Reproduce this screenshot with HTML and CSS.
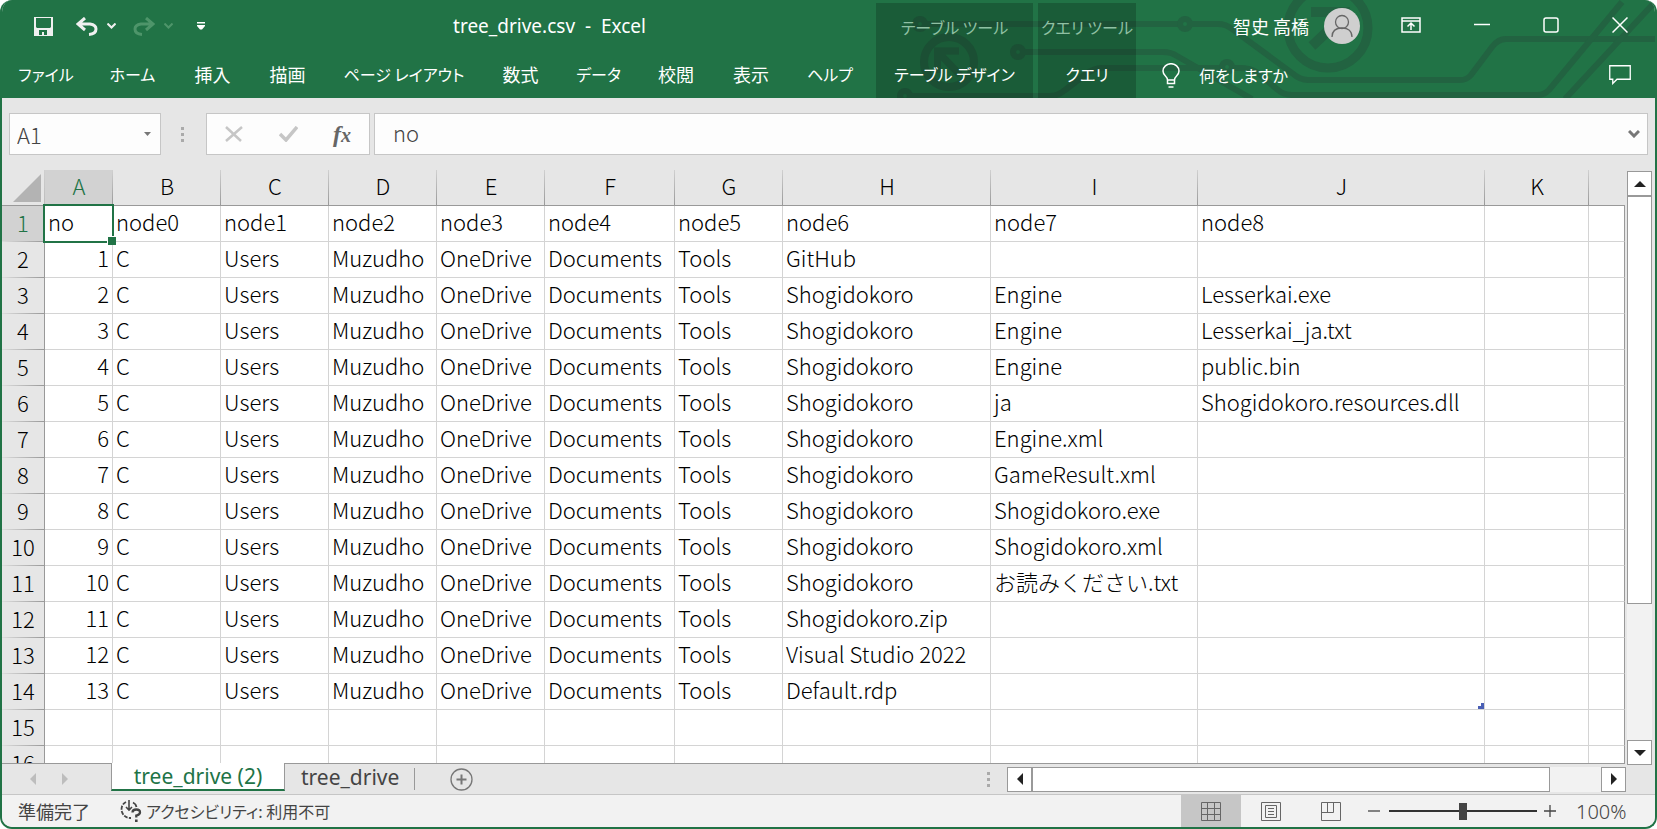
FILE: index.html
```
<!DOCTYPE html>
<html lang="ja">
<head>
<meta charset="utf-8">
<title>tree_drive.csv - Excel</title>
<link rel="stylesheet" href="styles.css">
</head>
<body>
<div class="window">
  <header class="header">
    <svg class="circuit" width="797" height="98" viewBox="860 0 797 98" aria-hidden="true">
      <g fill="none" stroke="#226341" stroke-width="6">
        <circle cx="920" cy="24" r="5"/><path d="M926 24H1179"/>
        <circle cx="1185" cy="24" r="5"/><path d="M1191 24H1218Q1226 24 1232 29L1292 73Q1300 80 1308 80H1460Q1467 80 1471 75L1492 47Q1498 39 1506 39H1657"/>
        <circle cx="1018" cy="52" r="5"/><path d="M1024 52H1163Q1171 52 1177 56L1252 99"/>
        <circle cx="905" cy="96" r="5"/><path d="M911 96H1050Q1058 96 1065 90L1086 74Q1094 68 1102 68H1220"/>
        <circle cx="1227" cy="67" r="5"/><path d="M1233 68H1240Q1250 68 1258 73L1278 90Q1284 95 1292 95H1538Q1544 95 1549 90L1622 2M1565 99L1653 4"/>
        <circle cx="949" cy="62" r="25" stroke-width="8"/><path stroke-width="7" d="M959 51H937.500V73M938 52L960 75"/>
        <circle cx="1328" cy="28" r="40" stroke-width="9"/><path stroke-width="10" d="M1311 12H1350M1347 13L1312 46"/>
      </g>
    </svg>
    <div class="header-left">
      <div class="title-row">
        <div class="quick">
          <button class="icon-button" aria-label="上書き保存"><svg width="19" height="19" viewBox="0 0 19 19"><path fill="#f0f0f0" fill-rule="evenodd" d="M0 0H19V19H0ZM2 1V10L3 11H16L17 10V1ZM5 13V18H8V15H10V18H13V13Z"/></svg></button>
          <button class="icon-button undo" aria-label="元に戻す"><svg width="22" height="19" viewBox="0 0 22 19"><path d="M9 1L2 7L9 13M2 7H14Q20 8 20 12Q20 17 13 17.500" fill="none" stroke="#f0f0f0" stroke-width="3"/></svg></button>
          <button class="icon-button drop" aria-label="元に戻すの一覧"><svg width="9" height="6" viewBox="0 0 9 6"><path d="M.5 .5L4.500 4.500L8.500 .5" fill="none" stroke="#f0f0f0" stroke-width="2"/></svg></button>
          <button class="icon-button redo" aria-label="やり直し" disabled><svg width="22" height="19" viewBox="0 0 22 19"><path d="M13 1L20 7L13 13M20 7H8Q2 8 2 12Q2 17 9 17.500" fill="none" stroke="#4e956a" stroke-width="3"/></svg></button>
          <button class="icon-button drop" aria-label="やり直しの一覧" disabled><svg width="9" height="6" viewBox="0 0 9 6"><path d="M.5 .5L4.500 4.500L8.500 .5" fill="none" stroke="#4e956a" stroke-width="2"/></svg></button>
          <button class="icon-button customize" aria-label="クイック アクセス ツール バーのユーザー設定"><svg width="8" height="8" viewBox="0 0 8 8"><path d="M0 0H8V1.500H0ZM0 3H8V4L5 7.500H3L0 4Z" fill="#fff"/></svg></button>
        </div>
        <h1 class="title">tree_drive.csv&nbsp; -&nbsp; Excel</h1>
      </div>
      <nav class="tabs">
        <button class="tab kana">ファイル</button><button class="tab kana">ホーム</button><button class="tab">挿入</button><button class="tab">描画</button><button class="tab kana">ページ レイアウト</button><button class="tab">数式</button><button class="tab kana">データ</button><button class="tab">校閲</button><button class="tab">表示</button><button class="tab kana">ヘルプ</button>
      </nav>
    </div>
    <div class="context context-table"><span class="context-title">テーブル ツール</span><button class="tab kana">テーブル デザイン</button></div>
    <div class="context context-query"><span class="context-title">クエリ ツール</span><button class="tab kana">クエリ</button></div>
    <div class="header-right">
      <div class="title-row account">
        <span class="user">智史 高橋</span>
        <button class="icon-button avatar" aria-label="アカウント"><svg width="36" height="36" viewBox="0 0 36 36"><circle cx="18" cy="18" r="18" fill="#cfcfcf"/><g fill="none" stroke="#666" stroke-width="1.300"><circle cx="18" cy="14" r="6.500"/><path d="M8 29C8 23 12 20 18 20S28 23 28 29"/></g></svg></button>
        <button class="icon-button ribbon" aria-label="リボンの表示オプション"><svg width="20" height="16" viewBox="0 0 20 16"><path d="M1 1H19V15H1ZM1 4H19M10 13V6.500M6.500 9.500L10 6L13.500 9.500" fill="none" stroke="#fff" stroke-width="1.500"/></svg></button>
        <button class="icon-button win" aria-label="最小化"><svg width="16" height="16" viewBox="0 0 16 16"><path d="M0 7.500H16" stroke="#fff" stroke-width="1.500"/></svg></button>
        <button class="icon-button win" aria-label="最大化"><svg width="16" height="16" viewBox="0 0 16 16"><rect x="1" y="1" width="14" height="14" rx="2" fill="none" stroke="#fff" stroke-width="1.500"/></svg></button>
        <button class="icon-button win" aria-label="閉じる"><svg width="16" height="16" viewBox="0 0 16 16"><path d="M.5 .5L15.500 15.500M15.500 .5L.5 15.500" stroke="#fff" stroke-width="1.500"/></svg></button>
      </div>
      <div class="tell">
        <button class="tell-button"><svg width="18" height="25" viewBox="0 0 18 25"><path d="M5.500 17C5.500 13 1 13 1 8A8 7.300 0 0 1 17 8C17 13 12.500 13 12.500 17ZM5.500 17V20.500H12.500V17M6.500 24H11.500" fill="none" stroke="#fff" stroke-width="1.500"/></svg>何をしますか</button>
        <button class="icon-button" aria-label="コメント"><svg width="22" height="20" viewBox="0 0 22 20"><path d="M.75 .75H21.250V14.250H8L3.750 18.500V14.250H.75Z" fill="none" stroke="#fff" stroke-width="1.300"/></svg></button>
      </div>
    </div>
  </header>

  <div class="formula-row">
    <div class="name-box"><input aria-label="名前ボックス" value="A1"><svg width="7" height="4" viewBox="0 0 7 4"><path d="M0 0H7L3.500 4Z" fill="#777"/></svg></div>
    <svg class="dots" width="3" height="15" viewBox="0 0 3 15" aria-hidden="true"><path d="M0 0H3V3H0ZM0 6H3V9H0ZM0 12H3V15H0Z" fill="#aaa"/></svg>
    <div class="formula-tools">
      <button class="icon-button" aria-label="キャンセル" disabled><svg width="18" height="16" viewBox="0 0 18 16"><path d="M1 1L16 15M17 1L1 15" stroke="#c6c6c6" stroke-width="2.500"/></svg></button>
      <button class="icon-button" aria-label="入力" disabled><svg width="19" height="16" viewBox="0 0 19 16"><path d="M1 8L7 14L18 1" fill="none" stroke="#c6c6c6" stroke-width="3.500"/></svg></button>
      <button class="fx" aria-label="関数の挿入">f<span>x</span></button>
    </div>
    <div class="formula-box"><input aria-label="数式バー" value="no"><button class="icon-button" aria-label="数式バーの展開"><svg width="12" height="8" viewBox="0 0 12 8"><path d="M1 1L6 6L11 1" fill="none" stroke="#777" stroke-width="3"/></svg></button></div>
  </div>

  <main class="sheet">
    <div class="grid-view">
      <table class="grid">
        <colgroup><col class="c-row"><col class="c-a"><col class="c-108"><col class="c-108"><col class="c-108"><col class="c-108"><col class="c-f"><col class="c-108"><col class="c-h"><col class="c-i"><col class="c-j"><col class="c-k"><col></colgroup>
        <thead><tr><th class="corner"><svg width="28" height="28" viewBox="0 0 28 28" aria-label="すべて選択"><path d="M28 0V28H0Z" fill="#b3b3b3"/></svg></th><th class="active">A</th><th>B</th><th>C</th><th>D</th><th>E</th><th>F</th><th>G</th><th>H</th><th>I</th><th>J</th><th>K</th><th></th></tr></thead>
        <tbody>
          <tr><th class="active">1</th><td class="selected">no</td><td>node0</td><td>node1</td><td>node2</td><td>node3</td><td>node4</td><td>node5</td><td>node6</td><td>node7</td><td>node8</td><td></td><td></td></tr>
          <tr><th>2</th><td>1</td><td>C</td><td>Users</td><td>Muzudho</td><td>OneDrive</td><td>Documents</td><td>Tools</td><td>GitHub</td><td></td><td></td><td></td><td></td></tr>
          <tr><th>3</th><td>2</td><td>C</td><td>Users</td><td>Muzudho</td><td>OneDrive</td><td>Documents</td><td>Tools</td><td>Shogidokoro</td><td>Engine</td><td>Lesserkai.exe</td><td></td><td></td></tr>
          <tr><th>4</th><td>3</td><td>C</td><td>Users</td><td>Muzudho</td><td>OneDrive</td><td>Documents</td><td>Tools</td><td>Shogidokoro</td><td>Engine</td><td>Lesserkai_ja.txt</td><td></td><td></td></tr>
          <tr><th>5</th><td>4</td><td>C</td><td>Users</td><td>Muzudho</td><td>OneDrive</td><td>Documents</td><td>Tools</td><td>Shogidokoro</td><td>Engine</td><td>public.bin</td><td></td><td></td></tr>
          <tr><th>6</th><td>5</td><td>C</td><td>Users</td><td>Muzudho</td><td>OneDrive</td><td>Documents</td><td>Tools</td><td>Shogidokoro</td><td>ja</td><td>Shogidokoro.resources.dll</td><td></td><td></td></tr>
          <tr><th>7</th><td>6</td><td>C</td><td>Users</td><td>Muzudho</td><td>OneDrive</td><td>Documents</td><td>Tools</td><td>Shogidokoro</td><td>Engine.xml</td><td></td><td></td><td></td></tr>
          <tr><th>8</th><td>7</td><td>C</td><td>Users</td><td>Muzudho</td><td>OneDrive</td><td>Documents</td><td>Tools</td><td>Shogidokoro</td><td>GameResult.xml</td><td></td><td></td><td></td></tr>
          <tr><th>9</th><td>8</td><td>C</td><td>Users</td><td>Muzudho</td><td>OneDrive</td><td>Documents</td><td>Tools</td><td>Shogidokoro</td><td>Shogidokoro.exe</td><td></td><td></td><td></td></tr>
          <tr><th>10</th><td>9</td><td>C</td><td>Users</td><td>Muzudho</td><td>OneDrive</td><td>Documents</td><td>Tools</td><td>Shogidokoro</td><td>Shogidokoro.xml</td><td></td><td></td><td></td></tr>
          <tr><th>11</th><td>10</td><td>C</td><td>Users</td><td>Muzudho</td><td>OneDrive</td><td>Documents</td><td>Tools</td><td>Shogidokoro</td><td>お読みください.txt</td><td></td><td></td><td></td></tr>
          <tr><th>12</th><td>11</td><td>C</td><td>Users</td><td>Muzudho</td><td>OneDrive</td><td>Documents</td><td>Tools</td><td>Shogidokoro.zip</td><td></td><td></td><td></td><td></td></tr>
          <tr><th>13</th><td>12</td><td>C</td><td>Users</td><td>Muzudho</td><td>OneDrive</td><td>Documents</td><td>Tools</td><td>Visual Studio 2022</td><td></td><td></td><td></td><td></td></tr>
          <tr><th>14</th><td>13</td><td>C</td><td>Users</td><td>Muzudho</td><td>OneDrive</td><td>Documents</td><td>Tools</td><td>Default.rdp</td><td></td><td class="table-end"></td><td></td><td></td></tr>
          <tr><th>15</th><td></td><td></td><td></td><td></td><td></td><td></td><td></td><td></td><td></td><td></td><td></td><td></td></tr>
          <tr><th>16</th><td></td><td></td><td></td><td></td><td></td><td></td><td></td><td></td><td></td><td></td><td></td><td></td></tr>
        </tbody>
      </table>
    </div>
    <div class="vscroll">
      <button class="scroll-button" aria-label="上へスクロール"><svg width="12" height="6" viewBox="0 0 12 6"><path d="M0 6L6 0L12 6Z" fill="#222"/></svg></button>
      <div class="vtrack"><div class="vthumb"></div></div>
      <button class="scroll-button" aria-label="下へスクロール"><svg width="12" height="6" viewBox="0 0 12 6"><path d="M0 0L6 6L12 0Z" fill="#222"/></svg></button>
    </div>
  </main>

  <div class="sheet-bar">
    <div class="sheet-nav">
      <button class="icon-button" aria-label="前のシート" disabled><svg width="6" height="12" viewBox="0 0 6 12"><path d="M6 0V12L0 6Z" fill="#bdbdbd"/></svg></button>
      <button class="icon-button" aria-label="次のシート" disabled><svg width="6" height="12" viewBox="0 0 6 12"><path d="M0 0V12L6 6Z" fill="#bdbdbd"/></svg></button>
    </div>
    <button class="sheet-tab current">tree_drive (2)</button>
    <button class="sheet-tab">tree_drive</button>
    <button class="icon-button add" aria-label="新しいシート"><svg width="23" height="23" viewBox="0 0 23 23"><circle cx="11.500" cy="11.500" r="10.500" fill="none" stroke="#777" stroke-width="1.300"/><path d="M6.500 11.500H16.500M11.500 6.500V16.500" stroke="#777" stroke-width="2"/></svg></button>
    <svg class="dots" width="3" height="15" viewBox="0 0 3 15" aria-hidden="true"><path d="M0 0H3V3H0ZM0 6H3V9H0ZM0 12H3V15H0Z" fill="#aaa"/></svg>
    <div class="hscroll">
      <button class="scroll-button" aria-label="左へスクロール"><svg width="6" height="12" viewBox="0 0 6 12"><path d="M6 0V12L0 6Z" fill="#222"/></svg></button>
      <div class="htrack"><div class="hthumb"></div></div>
      <button class="scroll-button" aria-label="右へスクロール"><svg width="6" height="12" viewBox="0 0 6 12"><path d="M0 0V12L6 6Z" fill="#222"/></svg></button>
    </div>
  </div>

  <footer class="status">
    <span class="ready">準備完了</span>
    <button class="access"><svg width="22" height="22" viewBox="0 0 22 22"><g fill="none" stroke="#444"><path d="M6 2A8 8 0 0 0 2 12Q4 18 11 18" stroke-width="1.800" stroke-dasharray="4 1.300"/><path d="M13 2.500Q16 4 16.500 7" stroke-width="1.800"/><path d="M9 0V9M6 7L9 10L12 7" stroke-width="1.600"/><path d="M12.500 12.500Q12.500 9.500 16.300 9.500T20 12.500Q20 14.500 16.300 15.500V17.500" stroke-width="2.300"/><path d="M16.300 19.500V22" stroke-width="2.600"/></g></svg>アクセシビリティ: 利用不可</button>
    <div class="views">
      <button class="view on" aria-label="標準"><svg width="20" height="19" viewBox="0 0 20 19"><path d="M.5 .5H19.500V18.500H.5ZM.5 6.500H19.500M.5 12.500H19.500M6.500 .5V18.500M13.500 .5V18.500" fill="none" stroke="#666"/></svg></button>
      <button class="view" aria-label="ページ レイアウト表示"><svg width="20" height="19" viewBox="0 0 20 19"><path d="M.5 .5H19.500V18.500H.5ZM4.500 3.500H15.500V15.500H4.500ZM7 6.500H13M7 9.500H13M7 12.500H13" fill="none" stroke="#666"/></svg></button>
      <button class="view" aria-label="改ページ プレビュー"><svg width="20" height="19" viewBox="0 0 20 19"><path d="M.5 .5H19.500V18.500H.5ZM.5 10.500H12.500V.5M6.500 .5V10.500" fill="none" stroke="#666"/></svg></button>
    </div>
    <button class="icon-button" aria-label="縮小"><svg width="12" height="12" viewBox="0 0 12 12"><path d="M0 6H12" stroke="#444" stroke-width="1.300"/></svg></button>
    <input class="zoom" type="range" min="0" max="100" value="50" aria-label="ズーム">
    <button class="icon-button" aria-label="拡大"><svg width="12" height="12" viewBox="0 0 12 12"><path d="M0 6H12M6 0V12" stroke="#444" stroke-width="1.300"/></svg></button>
    <button class="percent">100%</button>
  </footer>
</div>
</body>
</html>
```
FILE: styles.css
```
* { box-sizing: border-box; }
body { margin: 0; background: #fff; color: #000; font-family: "Noto Sans CJK JP", sans-serif; }
button, input { margin: 0; padding: 0; border: 0; background: none; color: inherit; font: inherit; border-radius: 0; }
svg { display: block; flex: none; }
.icon-button { display: flex; align-items: center; justify-content: center; flex: none; }

.window { display: flex; flex-direction: column; height: 100vh; overflow: hidden; border: 2px solid #217346; border-top: 0; border-radius: 12px; background: #e6e6e6; }

/* title bar and ribbon tabs */
.header { position: relative; display: flex; flex: none; height: 98px; background: #217346; color: #fff; font-size: 18px; font-feature-settings: "palt"; }
.circuit { position: absolute; top: 0; right: -2px; }
.header-left { flex: none; width: 872px; }
.title-row { display: flex; align-items: center; height: 52px; }
.quick { display: flex; align-items: center; padding-left: 32px; }
.undo { margin-left: 23px; }
.drop { margin-left: 9px; }
.redo { margin-left: 17px; }
.customize { margin-left: 24px; }
.title { flex: 1; margin: 0 0 0 20px; text-align: center; font: 400 19px/52px "Noto Sans", sans-serif; }
.tabs { display: grid; grid-template-columns: 88px 85px 75px 75px 158px 75px 81px 74px 76px 82px; height: 46px; }
.tab { height: 44px; text-align: center; line-height: 44px; white-space: nowrap; }
.kana { font-size: 16px; }
.context { position: relative; display: flex; flex-direction: column; flex: none; margin: 3px 5px 0 2px; background: rgba(0, 0, 0, .2); text-align: center; }
.context-table { width: 157px; }
.context-query { width: 98px; margin: 3px 0 0; }
.context-title { height: 49px; line-height: 49px; font-size: 16px; color: #8fc0a3; white-space: nowrap; }
.header-right { position: relative; flex: 1; }
.account { justify-content: flex-end; padding-right: 27px; white-space: nowrap; }
.avatar { margin-left: 15px; }
.ribbon { margin-left: 41px; padding-bottom: 2px; }
.win { margin-left: 53px; padding-bottom: 2px; }
.tell { display: flex; align-items: center; justify-content: space-between; height: 46px; padding: 0 24px 0 26px; }
.tell-button { display: flex; align-items: center; gap: 19px; font-size: 16px; }

/* formula bar */
.formula-row { display: flex; align-items: center; flex: none; height: 72px; padding: 0 7px; }
.name-box, .formula-tools, .formula-box { display: flex; align-items: center; height: 42px; border: 1px solid #c6c6c6; background: #fdfdfd; }
.name-box { width: 152px; padding: 0 9px 0 7px; }
.name-box input, .formula-box input { flex: 1; min-width: 0; color: #444; font-size: 22px; font-weight: 300; outline: 0; }
.formula-box input { padding-bottom: 4px; }
.dots { margin: 0 22px 0 20px; }
.formula-tools { width: 164px; justify-content: space-between; padding: 0 18px; color: #666; }
.fx { font: italic 700 24px/36px "Liberation Serif", serif; }
.fx span { font-size: 20px; }
.formula-box { flex: 1; margin-left: 4px; padding: 0 7px 0 18px; }

/* worksheet */
.sheet { display: flex; flex: 1; min-height: 0; }
.grid-view { flex: 1; min-width: 0; overflow: hidden; border-bottom: 1px solid #999; }
.grid { width: 100%; table-layout: fixed; border-collapse: separate; border-spacing: 0; font-size: 22px; font-weight: 300; }
.c-row { width: 43px; }
.c-a { width: 68px; }
.c-108 { width: 108px; }
.c-f { width: 130px; }
.c-h { width: 208px; }
.c-i { width: 207px; }
.c-j { width: 287px; }
.c-k { width: 104px; }
.grid th { height: 36px; padding: 0 0 4px; font-weight: 300; line-height: 31px; background: #e6e6e6; border: solid #999; border-width: 0 0 1px; }
.grid thead th { background: linear-gradient(#d0d0d0, #999) right / 1px 100% no-repeat #e6e6e6; }
.grid thead .corner { padding: 4px 0 3px 11px; background: linear-gradient(#d0d0d0, #bbb) right / 1px 100% no-repeat #e6e6e6; }
.grid tbody th { border-width: 0 1px 0 0; background: linear-gradient(90deg, #ddd, #999) bottom / 100% 1px no-repeat #e6e6e6; }
.grid .active { color: #217346; background-color: #d2d2d2; }
.grid thead th:last-child { background: #e6e6e6; }
.grid td { height: 36px; padding: 0 0 4px 3px; line-height: 31px; white-space: nowrap; background: #fff; border: solid #d4d4d4; border-width: 0 1px 1px 0; }
.grid td:nth-child(2) { padding: 0 3px 4px; text-align: right; }
.grid td:last-child { border-right-color: #999; }
.grid .selected:nth-child(2) { position: relative; text-align: left; }
.selected::before { content: ""; position: absolute; inset: -2px; border: 2px solid #217346; }
.selected::after { content: ""; position: absolute; right: -4px; bottom: -4px; width: 8px; height: 8px; border: solid #fff; border-width: 1px 0 0 1px; background: #217346; }
.table-end { position: relative; }
.table-end::after { content: ""; position: absolute; right: 0; bottom: 0; width: 6px; height: 6px; background: #4a5fb5; clip-path: polygon(50% 0, 100% 0, 100% 100%, 0 100%, 0 50%, 50% 50%); }

/* scroll bars */
.scroll-button { display: flex; align-items: center; justify-content: center; flex: none; width: 25px; height: 25px; border: 1px solid #999; background: #fff; }
.vscroll { display: flex; flex-direction: column; flex: none; width: 30px; margin-bottom: -1px; padding: 1px 3px 0 2px; }
.vtrack { flex: 1; background: #f2f2f2; }
.vthumb { height: 75%; border: 1px solid #999; background: #fff; }
.hscroll { display: flex; flex: none; width: 619px; max-width: 38%; margin-right: 29px; }
.htrack { flex: 1; background: #f2f2f2; }
.hthumb { width: 91%; height: 25px; border: 1px solid #999; background: #fff; }

/* sheet tabs */
.sheet-bar { display: flex; align-items: center; flex: none; height: 31px; border-bottom: 1px solid #c6c6c6; color: #444; font: 400 21px/28px "Noto Sans", sans-serif; }
.sheet-nav { display: flex; gap: 26px; width: 109px; padding-left: 28px; }
.sheet-tab { position: relative; align-self: flex-start; flex: none; height: 26px; padding: 0 16px; line-height: 24px; white-space: nowrap; }
.sheet-tab:not(.current)::after { content: ""; position: absolute; top: 4px; right: 0; width: 1px; height: 22px; background: #999; }
.current { width: 174px; margin-top: -1px; height: 28px; border: solid #999; border-width: 0 1px; border-bottom: 2px solid #217346; background: #fff; color: #217346; }
.add { margin: 0 auto 0 35px; }
.sheet-bar .dots { margin: 0 17px 0 0; }

/* status bar */
.status { display: flex; align-items: center; flex: none; height: 32px; padding: 0 29px 0 16px; background: #f2f2f2; color: #444; font-size: 18px; font-feature-settings: "palt"; }
.access { display: flex; align-items: center; gap: 4px; margin-left: 30px; font-size: 16px; line-height: 32px; }
.views { display: flex; align-self: stretch; margin: 0 7px 0 auto; }
.view { display: flex; align-items: center; justify-content: center; width: 60px; }
.on { background: #c6c6c6; }
.zoom { width: 148px; height: 18px; margin: 0 7px 0 9px; appearance: none; background: linear-gradient(#333, #333) center / 100% 2px no-repeat; }
.zoom::-webkit-slider-thumb { appearance: none; width: 8px; height: 17px; background: #444; }
.percent { width: 50px; margin-left: 20px; text-align: right; white-space: nowrap; font: 300 20px "Noto Sans", sans-serif; }
```
